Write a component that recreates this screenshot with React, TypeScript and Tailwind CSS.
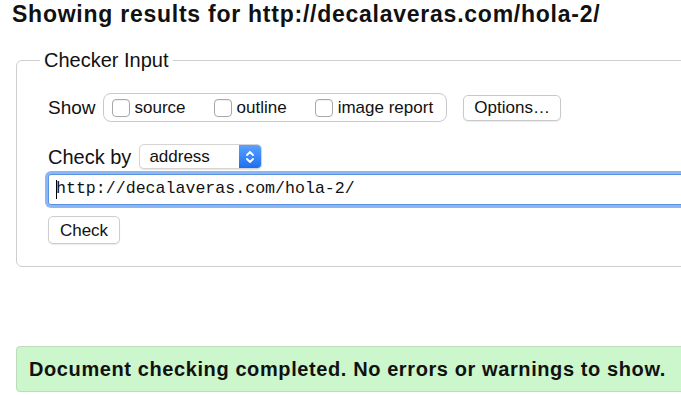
import React from 'react';

const Checkbox: React.FC<{ label: string }> = ({ label }) => (
  <label className="flex items-center gap-[5px]">
    <span className="w-[18px] h-[18px] rounded-[4px] border border-[#a8a8a8] bg-white shadow-[inset_0_1px_1px_rgba(0,0,0,0.06)]" />
    <span className="text-[17px] leading-none">{label}</span>
  </label>
);

const App: React.FC = () => {
  return (
    <div className="w-[681px] h-[395px] overflow-hidden bg-white text-[#111] font-['Liberation_Sans',Arial,sans-serif]">
      <h1 className="pl-3 text-[23px] leading-[28px] font-bold tracking-[0.75px]">Showing results for http://decalaveras.com/hola-2/</h1>

      <fieldset className="mt-[20px] ml-4 w-[720px] border border-[#cfcfcf] rounded-[6px] pl-[31px] pb-[22px]">
        <legend className="-ml-[8px] px-1 text-[20px] leading-[24px]">Checker Input</legend>

        <div className="mt-[21px] flex items-center">
          <span className="text-[19px] leading-none">Show</span>
          <div className="ml-[7px] h-[29px] flex items-center gap-[28px] pl-[8px] pr-[13px] border border-[#c9c9c9] rounded-[8px]">
            <Checkbox label="source" />
            <Checkbox label="outline" />
            <Checkbox label="image report" />
          </div>
          <button className="ml-[16px] h-[26px] w-[98px] border border-[#c9c9c9] rounded-[5px] bg-white text-[17px] leading-none shadow-[0_1px_1px_rgba(0,0,0,0.08)]">
            Options…
          </button>
        </div>

        <div className="mt-[22px] flex items-center">
          <span className="text-[20px] leading-none">Check by</span>
          <div className="ml-[8px] h-[25px] w-[123px] flex rounded-[5px] border border-[#d4d4d4] bg-white shadow-[0_1px_1px_rgba(0,0,0,0.1)] overflow-hidden">
            <span className="flex-1 pl-[9px] flex items-center text-[17px] leading-none">address</span>
            <span className="w-[22px] flex items-center justify-center bg-gradient-to-b from-[#5aa2ff] to-[#1a6ff0]">
              <svg width="10" height="16" viewBox="0 0 10 16" fill="none" stroke="white" strokeWidth="1.8" strokeLinecap="round" strokeLinejoin="round">
                <path d="M2 6 L5 3 L8 6" />
                <path d="M2 10 L5 13 L8 10" />
              </svg>
            </span>
          </div>
        </div>

        <div className="mt-[5px] h-[31px] flex items-center pl-[7px] border border-[#5b93e4] rounded-[3px] shadow-[0_0_0_3px_#8db7f3] bg-white font-['Liberation_Mono',monospace] text-[16.6px] leading-none">
          <span className="w-px h-[19px] bg-black -mr-px" />
          <span>http://decalaveras.com/hola-2/</span>
        </div>

        <button className="mt-[11px] h-[28px] w-[72px] border border-[#cdcdcd] rounded-[5px] bg-white text-[17px] leading-none shadow-[0_1px_1px_rgba(0,0,0,0.08)]">
          Check
        </button>
      </fieldset>

      <div className="mt-[79px] ml-4 w-[700px] h-[46px] flex items-center pl-[12px] bg-[#ccf6cc] border border-[#bcdcbc] rounded-[4px]">
        <span className="text-[20px] font-bold leading-none tracking-[0.6px]">Document checking completed. No errors or warnings to show.</span>
      </div>
    </div>
  );
};

export default App;
